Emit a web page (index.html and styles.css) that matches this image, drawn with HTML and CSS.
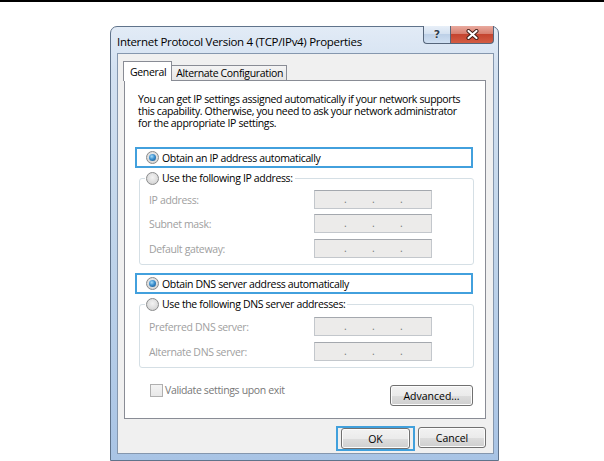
FILE: index.html
```html
<!DOCTYPE html>
<html>
<head>
<meta charset="utf-8">
<title>Internet Protocol Version 4 (TCP/IPv4) Properties</title>
<link rel="stylesheet" href="styles.css">
</head>
<body>
<div class="topline"></div>
<div class="window">
  <div class="titlebar">
    <span class="title">Internet Protocol Version 4 (TCP/IPv4) Properties</span>
    <div class="caption">
      <div class="cbtn help"><span>?</span></div>
      <div class="cbtn close">
        <svg width="13" height="11" viewBox="0 0 13 11"><path d="M2.5 2 L10.5 9 M10.5 2 L2.5 9" stroke="#3a1a14" stroke-width="4" stroke-linecap="round"/><path d="M2.5 2 L10.5 9 M10.5 2 L2.5 9" stroke="#ffffff" stroke-width="2.2" stroke-linecap="round"/></svg>
      </div>
    </div>
  </div>
  <div class="client">
    <div class="tabs">
      <div class="tab active">General</div>
      <div class="tab">Alternate Configuration</div>
    </div>
    <div class="panel">
      <p class="intro">You can get IP settings assigned automatically if your network supports
this capability. Otherwise, you need to ask your network administrator
for the appropriate IP settings.</p>
      <div class="hl"><span class="radio on"></span><span>Obtain an IP address automatically</span></div>
      <fieldset class="group g1">
        <legend><span class="legend-in"><span class="radio"></span><span>Use the following IP address:</span></span></legend>
        <div class="row"><span class="lbl">IP address:</span><div class="ip"><span>.</span><span>.</span><span>.</span></div></div>
        <div class="row"><span class="lbl">Subnet mask:</span><div class="ip"><span>.</span><span>.</span><span>.</span></div></div>
        <div class="row r3"><span class="lbl">Default gateway:</span><div class="ip"><span>.</span><span>.</span><span>.</span></div></div>
      </fieldset>
      <div class="hl hl2"><span class="radio on"></span><span>Obtain DNS server address automatically</span></div>
      <fieldset class="group g2">
        <legend><span class="legend-in"><span class="radio"></span><span>Use the following DNS server addresses:</span></span></legend>
        <div class="row"><span class="lbl">Preferred DNS server:</span><div class="ip"><span>.</span><span>.</span><span>.</span></div></div>
        <div class="row r3"><span class="lbl">Alternate DNS server:</span><div class="ip"><span>.</span><span>.</span><span>.</span></div></div>
      </fieldset>
      <div class="bottomrow">
        <label class="check"><span class="cb"></span><span>Validate settings upon exit</span></label>
        <button class="btn adv">Advanced...</button>
      </div>
    </div>
    <div class="footer">
      <div class="okwrap"><button class="btn ok">OK</button></div>
      <button class="btn cancel">Cancel</button>
    </div>
  </div>
</div>
</body>
</html>
```

FILE: styles.css
```css
* { box-sizing: border-box; }
html, body { margin: 0; padding: 0; }
body {
  width: 604px;
  height: 461px;
  overflow: hidden;
  background: #fff;
  font-family: "Open Sans", "Noto Sans", sans-serif;
  font-size: 10.5px;
  letter-spacing: -0.35px;
  color: #000;
}
.topline { height: 2px; background: #000; }

.window {
  margin: 24px 0 0 110px;
  width: 389px;
  height: 435px;
  border: 1px solid #60738b;
  border-radius: 7px 7px 0 0;
  padding: 0 4px 6px 6px;
  background: linear-gradient(180deg, #e2ebf6 0%, #d3e1f1 10%, #c2d6eb 45%, #a9c4e5 100%);
  display: flex;
  flex-direction: column;
}
.titlebar {
  height: 26px;
  display: flex;
  justify-content: space-between;
  align-items: flex-start;
}
.title { margin-top: 8px; font-size: 11.5px; letter-spacing: -0.3px; line-height: 14px; }
.caption { display: flex; margin-top: -1px; }
.cbtn {
  height: 18px;
  display: flex;
  align-items: center;
  justify-content: center;
  border: 1px solid #56667b;
  border-top: none;
}
.help {
  width: 27px;
  border-right: none;
  border-radius: 0 0 0 4px;
  background: linear-gradient(#e8eff8, #d5e2f1 45%, #bdd0e7 50%, #d0e0f2);
}
.help span {
  font-family: "DejaVu Sans", sans-serif;
  font-weight: bold;
  font-size: 11px;
  line-height: 11px;
  letter-spacing: 0;
  color: #2f3d4f;
  text-shadow: 0 0 1px #fff, 0 0 1px #fff;
}
.close {
  width: 44px;
  border-radius: 0 0 4px 0;
  background: linear-gradient(#e9aa9f, #d88070 45%, #c4442f 50%, #d45c43 100%);
}

.client {
  flex: none;
  height: 401px;
  border: 1px solid #8597ae;
  background: #f0f0f0;
  display: flex;
  flex-direction: column;
}
.tabs {
  height: 26px;
  display: flex;
  align-items: flex-end;
  padding-left: 5px;
  position: relative;
  z-index: 1;
}
.tab {
  height: 15px;
  border: 1px solid #898c95;
  border-bottom: none;
  border-left: none;
  padding: 0 3px 0 4px;
  line-height: 14px;
  background: linear-gradient(#f4f4f4, #e6e6e6);
}
.tab.active {
  height: 20px;
  margin-bottom: -1px;
  border-left: 1px solid #898c95;
  padding: 3px 5px 0 6px;
  background: #fff;
}
.panel {
  height: 339px;
  margin: 0 7px 0 6px;
  border: 1px solid #898c95;
  background: #fff;
  display: flex;
  flex-direction: column;
  align-items: flex-start;
}
.intro { margin: 12px 0 0 13px; line-height: 12px; white-space: pre-line; }

.hl {
  margin: 18px 0 0 10px;
  width: 338px;
  height: 21px;
  border: 2px solid #42a0dd;
  display: flex;
  align-items: center;
  padding-left: 9px;
}
.hl2 { margin-top: 8px; }

.radio {
  flex: none;
  width: 13px;
  height: 13px;
  border-radius: 50%;
  border: 1px solid #8a8b8c;
  background: radial-gradient(circle at 50% 40%, #f3f3f3 0%, #dadada 65%, #c6c6c6 100%);
  display: flex;
  align-items: center;
  justify-content: center;
  margin-right: 3px;
}
.radio.on::after {
  content: "";
  width: 7px;
  height: 7px;
  border-radius: 50%;
  background: radial-gradient(circle at 40% 35%, #a7dcf8 0%, #3b8fcf 45%, #164f80 100%);
}

.group {
  margin: 4px 0 0 14px;
  width: 335px;
  min-width: 0;
  border: 1px solid #d5dfe5;
  border-radius: 3px;
  padding: 5px 0 6px 9px;
}
.g2 { padding-top: 6px; }
.group legend { padding: 0 2px 0 1px; margin-left: -4px; }
.legend-in { display: flex; align-items: center; height: 13px; line-height: 13px; }

.row { display: flex; align-items: center; height: 19px; }
.row + .row { margin-top: 5px; }
.row.r3 { margin-top: 6px; }
.lbl { width: 165px; color: #a0a0a0; }
.ip {
  width: 118px;
  height: 19px;
  border: 1px solid #c3c7cc;
  border-top-color: #a4a8ae;
  background: #ecebea;
  display: flex;
  padding-left: 29px;
  line-height: 17px;
  color: #7a7a7a;
}
.ip span { width: 28px; }

.bottomrow {
  width: 100%;
  margin-top: 17px;
  padding: 0 12px 0 25px;
  display: flex;
  justify-content: space-between;
  align-items: flex-start;
}
.check { display: flex; align-items: center; margin-top: -1px; color: #787878; line-height: 13px; }
.cb {
  width: 13px;
  height: 13px;
  border: 1px solid #b0b0b0;
  background: linear-gradient(#f4f4f4, #e8e8e8);
  margin-right: 2px;
}

.btn {
  font: inherit;
  color: #000;
  height: 21px;
  border: 1px solid #707070;
  border-radius: 3px;
  background: linear-gradient(#f2f2f2 0%, #ebebeb 50%, #dddddd 51%, #cfcfcf 100%);
  box-shadow: inset 0 0 0 1px #fcfcfc;
  padding: 0;
}
.adv { width: 83px; }

.footer {
  display: flex;
  justify-content: flex-end;
  align-items: flex-start;
  padding: 7px 7px 0 0;
  gap: 3px;
}
.okwrap {
  width: 79px;
  height: 25px;
  border: 2px solid #41a0dc;
  display: flex;
  align-items: center;
  justify-content: center;
}
.ok { width: 69px; }
.cancel { width: 68px; margin-top: 1px; }
```
